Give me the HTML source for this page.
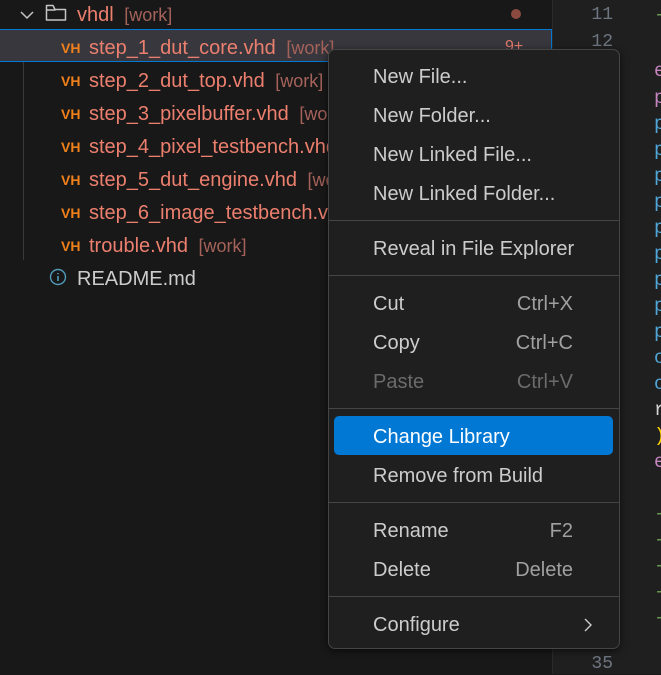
<!DOCTYPE html>
<html><head><meta charset="utf-8"><style>
*{margin:0;padding:0;box-sizing:border-box}
body{width:661px;height:674px;overflow:hidden;background:#181818;font-family:"Liberation Sans",sans-serif;font-size:20px;position:relative}
.a{position:absolute;white-space:nowrap;line-height:22px}
.f{color:#ec7f6e}
.w{color:#a5625a;font-size:18px}
.vh{position:absolute;color:#f0801a;font-weight:bold;font-size:14px;line-height:22px}
#ed{position:absolute;left:552px;top:0;width:109px;height:674px;background:#1f1f1f;border-left:1px solid #2b2b2b}
.ln{position:absolute;right:48px;color:#6e7681;font-family:"Liberation Mono",monospace;font-size:18px;line-height:22px}
.c{position:absolute;left:101px;font-family:"Liberation Mono",monospace;font-size:19px;line-height:22px}
#menu{position:absolute;left:328px;top:49px;width:292px;height:600px;background:#1f1f1f;border:1px solid #454545;border-radius:7px;box-shadow:0 2px 8px rgba(0,0,0,.6)}
.m{position:absolute;left:44px;color:#cccccc;line-height:22px;white-space:nowrap}
.k{position:absolute;right:46px;color:#a0a0a0;line-height:22px}
.sep{position:absolute;left:0;right:0;height:1px;background:#454545}
</style></head><body>
<svg width="16" height="16" viewBox="0 0 16 16" style="position:absolute;left:19px;top:7px"><path d="M2 5l6 6 6-6" fill="none" stroke="#c5c5c5" stroke-width="1.5"/></svg>
<svg width="22" height="20" viewBox="0 0 22 20" style="position:absolute;left:45px;top:3px"><path d="M1.5 4.5v12.5h19V6.5H10L8 2.5H1.5z M1.5 7h9" fill="none" stroke="#c5c5c5" stroke-width="1.5" stroke-linejoin="round"/></svg>
<div class="a f" style="left:77px;top:4px">vhdl <span class="w">&nbsp;[work]</span></div>
<div style="position:absolute;left:511px;top:9px;width:10px;height:10px;border-radius:50%;background:#8a4a40"></div>
<div style="position:absolute;left:23px;top:62px;width:1px;height:198px;background:#3a3a3a"></div>
<div style="position:absolute;left:0;top:29px;width:552px;height:33px;background:#37373d;border-top:1px solid #0078d4;border-bottom:1px solid #0078d4;border-right:1px solid #0078d4"></div>
<div class="a" style="left:505px;top:36px;color:#e07a6b;font-size:16px">9+</div>

<div class="vh" style="left:61px;top:37px">VH</div><div class="a f" style="left:89px;top:37px">step_1_dut_core.vhd <span class="w">&nbsp;[work]</span></div>
<div class="vh" style="left:61px;top:70px">VH</div><div class="a f" style="left:89px;top:70px">step_2_dut_top.vhd <span class="w">&nbsp;[work]</span></div>
<div class="vh" style="left:61px;top:103px">VH</div><div class="a f" style="left:89px;top:103px">step_3_pixelbuffer.vhd <span class="w">&nbsp;[work]</span></div>
<div class="vh" style="left:61px;top:136px">VH</div><div class="a f" style="left:89px;top:136px">step_4_pixel_testbench.vhd</div>
<div class="vh" style="left:61px;top:169px">VH</div><div class="a f" style="left:89px;top:169px">step_5_dut_engine.vhd <span class="w">&nbsp;[work]</span></div>
<div class="vh" style="left:61px;top:202px">VH</div><div class="a f" style="left:89px;top:202px">step_6_image_testbench.vhd</div>
<div class="vh" style="left:61px;top:235px">VH</div><div class="a f" style="left:89px;top:235px">trouble.vhd <span class="w">&nbsp;[work]</span></div>
<svg width="18" height="18" viewBox="0 0 18 18" style="position:absolute;left:49px;top:268px"><circle cx="9" cy="9" r="7.5" fill="none" stroke="#519aba" stroke-width="1.4"/><path d="M9 8v5M9 5v1.3" stroke="#519aba" stroke-width="1.6"/></svg>
<div class="a" style="left:77px;top:268px;color:#cccccc">README.md</div>

<div id="ed">
<div class="ln" style="top:4px">11</div>
<div class="ln" style="top:31px">12</div>
<div class="ln" style="top:653px">35</div>
<div class="c" style="top:4px;color:#6a9955">-</div>
<div class="c" style="top:60px;color:#c586c0">e</div>
<div class="c" style="top:87px;color:#c586c0">p</div>
<div class="c" style="top:113px;color:#4fa7d8">p</div>
<div class="c" style="top:139px;color:#4fa7d8">p</div>
<div class="c" style="top:165px;color:#4fa7d8">p</div>
<div class="c" style="top:191px;color:#4fa7d8">p</div>
<div class="c" style="top:217px;color:#4fa7d8">p</div>
<div class="c" style="top:243px;color:#4fa7d8">p</div>
<div class="c" style="top:269px;color:#4fa7d8">p</div>
<div class="c" style="top:295px;color:#4fa7d8">p</div>
<div class="c" style="top:321px;color:#4fa7d8">p</div>
<div class="c" style="top:347px;color:#4fa7d8">o</div>
<div class="c" style="top:373px;color:#4fa7d8">o</div>
<div class="c" style="top:399px;color:#d4d4d4">r</div>
<div class="c" style="top:425px;color:#ffd700">)</div>
<div class="c" style="top:451px;color:#c586c0">e</div>
<div class="c" style="top:503px;color:#6a9955">-</div>
<div class="c" style="top:529px;color:#6a9955">-</div>
<div class="c" style="top:555px;color:#6a9955">-</div>
<div class="c" style="top:581px;color:#6a9955">-</div>
<div class="c" style="top:607px;color:#6a9955">-</div>
</div>

<div id="menu">
<div class="m" style="top:16px">New File...</div>
<div class="m" style="top:55px">New Folder...</div>
<div class="m" style="top:94px">New Linked File...</div>
<div class="m" style="top:133px">New Linked Folder...</div>
<div class="sep" style="top:170px"></div>
<div class="m" style="top:188px">Reveal in File Explorer</div>
<div class="sep" style="top:225px"></div>
<div class="m" style="top:243px">Cut</div><div class="k" style="top:243px">Ctrl+X</div>
<div class="m" style="top:282px">Copy</div><div class="k" style="top:282px">Ctrl+C</div>
<div class="m" style="top:321px;color:#6b6b6b">Paste</div><div class="k" style="top:321px;color:#6b6b6b">Ctrl+V</div>
<div class="sep" style="top:358px"></div>
<div style="position:absolute;left:5px;top:366px;width:279px;height:39px;background:#0078d4;border-radius:5px"></div>
<div class="m" style="top:376px;color:#fff">Change Library</div>
<div class="m" style="top:415px">Remove from Build</div>
<div class="sep" style="top:452px"></div>
<div class="m" style="top:470px">Rename</div><div class="k" style="top:470px">F2</div>
<div class="m" style="top:509px">Delete</div><div class="k" style="top:509px">Delete</div>
<div class="sep" style="top:546px"></div>
<div class="m" style="top:564px">Configure</div>
<svg width="10" height="16" viewBox="0 0 10 16" style="position:absolute;left:254px;top:567px"><path d="M2 2l6 6-6 6" fill="none" stroke="#cccccc" stroke-width="1.4"/></svg>
</div>
</body></html>
